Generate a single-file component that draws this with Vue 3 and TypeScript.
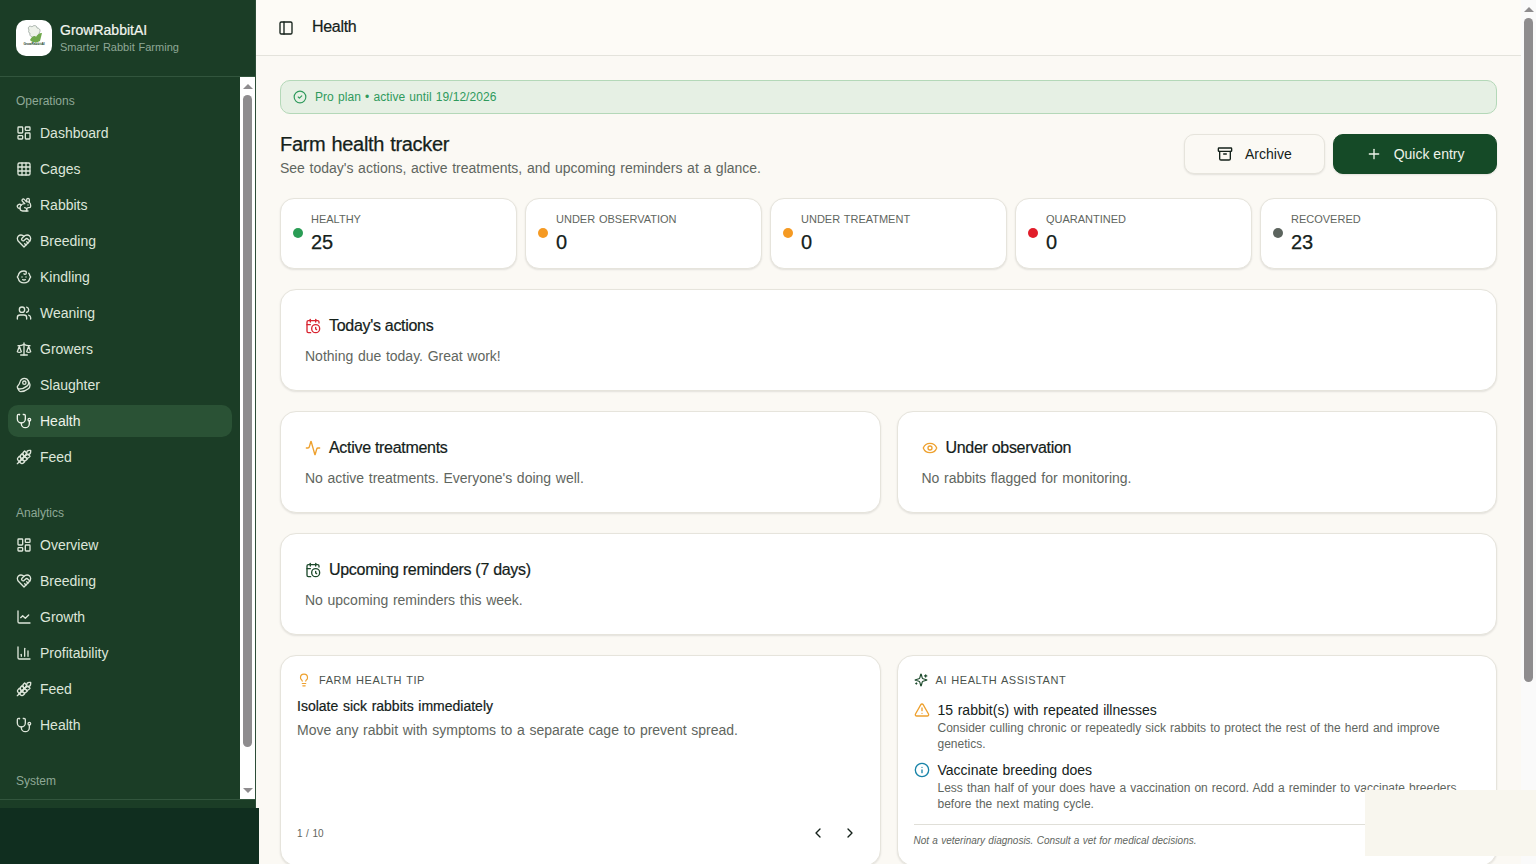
<script setup lang="ts">
const icons: Record<string, string> = {
  dashboard: '<rect width="7" height="9" x="3" y="3" rx="1"/><rect width="7" height="5" x="14" y="3" rx="1"/><rect width="7" height="9" x="14" y="12" rx="1"/><rect width="7" height="5" x="3" y="16" rx="1"/>',
  grid: '<rect width="18" height="18" x="3" y="3" rx="2"/><path d="M3 9h18"/><path d="M3 15h18"/><path d="M9 3v18"/><path d="M15 3v18"/>',
  rabbit: '<path d="M13 16a3 3 0 0 1 2.24 5"/><path d="M18 12h.01"/><path d="M18 21h-8a4 4 0 0 1-4-4 7 7 0 0 1 7-7h.2L9.6 6.4a1 1 0 1 1 2.8-2.8L15.8 7h.2c3.3 0 6 2.7 6 6v1a2 2 0 0 1-2 2h-1a3 3 0 0 0-3 3"/><path d="M20 8.54V4a2 2 0 1 0-4 0v3"/><path d="M7.612 12.524a3 3 0 1 0-1.6 4.3"/>',
  heart: '<path d="M19 14c1.49-1.46 3-3.21 3-5.5A5.5 5.5 0 0 0 16.5 3c-1.76 0-3 .5-4.5 2-1.5-1.5-2.74-2-4.5-2A5.5 5.5 0 0 0 2 8.5c0 2.3 1.5 4.05 3 5.5l7 7Z"/><path d="M12 5 9.04 7.96a2.17 2.17 0 0 0 0 3.08c.82.82 2.13.85 3 .07l2.07-1.9a2.82 2.82 0 0 1 3.79 0l2.96 2.66"/><path d="m18 15-2-2"/><path d="m15 18-2-2"/>',
  baby: '<path d="M9 12h.01"/><path d="M15 12h.01"/><path d="M10 16c.5.3 1.2.5 2 .5s1.5-.2 2-.5"/><path d="M19 6.3a9 9 0 0 1 1.8 3.9 2 2 0 0 1 0 3.6 9 9 0 0 1-17.6 0 2 2 0 0 1 0-3.6A9 9 0 0 1 12 3c2 0 3.5 1.1 3.5 2.5s-.9 2.5-2 2.5c-.8 0-1.5-.4-1.5-1"/>',
  users: '<path d="M16 21v-2a4 4 0 0 0-4-4H6a4 4 0 0 0-4 4v2"/><circle cx="9" cy="7" r="4"/><path d="M22 21v-2a4 4 0 0 0-3-3.87"/><path d="M16 3.13a4 4 0 0 1 0 7.75"/>',
  scale: '<path d="m16 16 3-8 3 8c-.87.65-1.92 1-3 1s-2.13-.35-3-1Z"/><path d="m2 16 3-8 3 8c-.87.65-1.92 1-3 1s-2.13-.35-3-1Z"/><path d="M7 21h10"/><path d="M12 3v18"/><path d="M3 7h2c2 0 5-1 7-2 2 1 5 2 7 2h2"/>',
  beef: '<circle cx="12.5" cy="8.5" r="2.5"/><path d="M12.5 2a6.5 6.5 0 0 0-6.22 4.6c-1.1 3.13-.78 3.9-3.18 6.08A3 3 0 0 0 5 18c4 0 8.4-1.8 11.4-4.3A6.5 6.5 0 0 0 12.5 2Z"/><path d="m18.5 6 2.19 4.5a6.48 6.48 0 0 1 .31 2 6.49 6.49 0 0 1-2.6 5.2C15.4 20.2 11 22 7 22a3 3 0 0 1-2.68-1.66L2.4 16.5"/>',
  stethoscope: '<path d="M4.8 2.3A.3.3 0 1 0 5 2H4a2 2 0 0 0-2 2v5a6 6 0 0 0 6 6a6 6 0 0 0 6-6V4a2 2 0 0 0-2-2h-1a.2.2 0 1 0 .3.3"/><path d="M8 15v1a6 6 0 0 0 6 6a6 6 0 0 0 6-6v-4"/><circle cx="20" cy="10" r="2"/>',
  wheat: '<path d="M2 22 16 8"/><path d="M3.47 12.53 5 11l1.53 1.53a3.5 3.5 0 0 1 0 4.94L5 19l-1.53-1.53a3.5 3.5 0 0 1 0-4.94Z"/><path d="M7.47 8.53 9 7l1.53 1.53a3.5 3.5 0 0 1 0 4.94L9 15l-1.53-1.53a3.5 3.5 0 0 1 0-4.94Z"/><path d="M11.47 4.53 13 3l1.53 1.53a3.5 3.5 0 0 1 0 4.94L13 11l-1.53-1.53a3.5 3.5 0 0 1 0-4.94Z"/><path d="M20 2h2v2a4 4 0 0 1-4 4h-2V6a4 4 0 0 1 4-4Z"/><path d="M11.47 17.47 13 19l-1.53 1.53a3.5 3.5 0 0 1-4.94 0L5 19l1.53-1.53a3.5 3.5 0 0 1 4.94 0Z"/><path d="M15.47 13.47 17 15l-1.53 1.53a3.5 3.5 0 0 1-4.94 0L9 15l1.53-1.53a3.5 3.5 0 0 1 4.94 0Z"/><path d="M19.47 9.47 21 11l-1.53 1.53a3.5 3.5 0 0 1-4.94 0L13 11l1.53-1.53a3.5 3.5 0 0 1 4.94 0Z"/>',
  line: '<path d="M3 3v16a2 2 0 0 0 2 2h16"/><path d="m19 9-5 5-4-4-3 3"/>',
  bars: '<path d="M3 3v16a2 2 0 0 0 2 2h16"/><path d="M18 17V9"/><path d="M13 17V5"/><path d="M8 17v-3"/>',
  panel: '<rect width="18" height="18" x="3" y="3" rx="2"/><path d="M9 3v18"/>',
  check: '<circle cx="12" cy="12" r="10"/><path d="m9 12 2 2 4-4"/>',
  archive: '<rect width="20" height="5" x="2" y="3" rx="1"/><path d="M4 8v11a2 2 0 0 0 2 2h12a2 2 0 0 0 2-2V8"/><path d="M10 12h4"/>',
  plus: '<path d="M5 12h14"/><path d="M12 5v14"/>',
  calendar: '<path d="M21 7.5V6a2 2 0 0 0-2-2H5a2 2 0 0 0-2 2v14a2 2 0 0 0 2 2h3.5"/><path d="M16 2v4"/><path d="M8 2v4"/><path d="M3 10h5"/><path d="M17.5 17.5 16 16.3V14"/><circle cx="16" cy="16" r="6"/>',
  activity: '<path d="M22 12h-2.48a2 2 0 0 0-1.93 1.46l-2.35 8.36a.25.25 0 0 1-.48 0L9.24 2.18a.25.25 0 0 0-.48 0l-2.35 8.36A2 2 0 0 1 4.49 12H2"/>',
  eye: '<path d="M2.062 12.348a1 1 0 0 1 0-.696 10.75 10.75 0 0 1 19.876 0 1 1 0 0 1 0 .696 10.75 10.75 0 0 1-19.876 0"/><circle cx="12" cy="12" r="3"/>',
  bulb: '<path d="M15 14c.2-1 .7-1.7 1.5-2.5 1-.9 1.5-2.2 1.5-3.5A6 6 0 0 0 6 8c0 1 .2 2.2 1.5 3.5.7.7 1.3 1.5 1.5 2.5"/><path d="M9 18h6"/><path d="M10 22h4"/>',
  sparkles: '<path d="M9.937 15.5A2 2 0 0 0 8.5 14.063l-6.135-1.582a.5.5 0 0 1 0-.962L8.5 9.936A2 2 0 0 0 9.937 8.5l1.582-6.135a.5.5 0 0 1 .963 0L14.063 8.5A2 2 0 0 0 15.5 9.937l6.135 1.581a.5.5 0 0 1 0 .964L15.5 14.063a2 2 0 0 0-1.437 1.437l-1.582 6.135a.5.5 0 0 1-.963 0z"/><path d="M20 3v4"/><path d="M22 5h-4"/><path d="M4 17v2"/><path d="M5 18H3"/>',
  alert: '<path d="m21.73 18-8-14a2 2 0 0 0-3.48 0l-8 14A2 2 0 0 0 4 21h16a2 2 0 0 0 1.73-3"/><path d="M12 9v4"/><path d="M12 17h.01"/>',
  info: '<circle cx="12" cy="12" r="10"/><path d="M12 16v-4"/><path d="M12 8h.01"/>',
  left: '<path d="m15 18-6-6 6-6"/>',
  right: '<path d="m9 18 6-6-6-6"/>',
}

const navGroups = [
  {
    label: 'Operations',
    items: [
      { name: 'Dashboard', icon: 'dashboard' },
      { name: 'Cages', icon: 'grid' },
      { name: 'Rabbits', icon: 'rabbit' },
      { name: 'Breeding', icon: 'heart' },
      { name: 'Kindling', icon: 'baby' },
      { name: 'Weaning', icon: 'users' },
      { name: 'Growers', icon: 'scale' },
      { name: 'Slaughter', icon: 'beef' },
      { name: 'Health', icon: 'stethoscope', active: true },
      { name: 'Feed', icon: 'wheat' },
    ],
  },
  {
    label: 'Analytics',
    items: [
      { name: 'Overview', icon: 'dashboard' },
      { name: 'Breeding', icon: 'heart' },
      { name: 'Growth', icon: 'line' },
      { name: 'Profitability', icon: 'bars' },
      { name: 'Feed', icon: 'wheat' },
      { name: 'Health', icon: 'stethoscope' },
    ],
  },
  { label: 'System', items: [] as { name: string; icon: string; active?: boolean }[] },
]

const stats = [
  { label: 'Healthy', value: 25, color: '#2a9d55' },
  { label: 'Under observation', value: 0, color: '#f59a23' },
  { label: 'Under treatment', value: 0, color: '#f59a23' },
  { label: 'Quarantined', value: 0, color: '#e11d2a' },
  { label: 'Recovered', value: 23, color: '#5c645e' },
]
</script>

<template>
  <div class="app">
    <aside class="rail">
      <div class="sidebar">
        <div class="brand">
          <div class="logo">
            <svg viewBox="0 0 36 36" width="36" height="36">
              <path d="M13 10c-2-3 1-5 3-3 1-2 5-2 5 1 3 0 4 3 2 5 1 3-2 5-4 4-3 1-6-1-5-4-1 0-2-1-1-3z" fill="#eef2ea" stroke="#8d9a92" stroke-width="0.7" />
              <path d="M14 20c2 3 7 3 10 1l2-8c-3 0-5 2-6 4-1-2-4-1-6 3z" fill="#6fa84b" />
              <text x="18" y="25" text-anchor="middle" class="logo-text">GrowRabbitAI</text>
            </svg>
          </div>
          <div class="brand-text">
            <div class="brand-name">GrowRabbitAI</div>
            <div class="brand-sub">Smarter Rabbit Farming</div>
          </div>
        </div>
        <div class="nav-wrap">
          <nav class="nav">
            <section v-for="group in navGroups" :key="group.label" class="nav-group">
              <div class="nav-label">{{ group.label }}</div>
              <a v-for="item in group.items" :key="item.name" class="nav-item" :class="{ active: item.active }">
                <svg class="ic" viewBox="0 0 24 24" v-html="icons[item.icon]"></svg>
                <span>{{ item.name }}</span>
              </a>
            </section>
          </nav>
          <div class="vbar nav-bar">
            <span class="arrow up"></span>
            <span class="thumb"></span>
            <span class="arrow down"></span>
          </div>
        </div>
        <div class="side-foot"></div>
      </div>
      <div class="rail-bottom"></div>
    </aside>

    <div class="scroller">
      <header class="topbar">
        <button class="icon-btn"><svg class="ic" viewBox="0 0 24 24" v-html="icons.panel"></svg></button>
        <div class="topbar-title">Health</div>
      </header>

      <main class="content">
        <div class="plan">
          <svg class="ic ic14" viewBox="0 0 24 24" v-html="icons.check"></svg>
          <span>Pro plan • active until 19/12/2026</span>
        </div>

        <div class="title-row">
          <div>
            <h1>Farm health tracker</h1>
            <p class="sub">See today's actions, active treatments, and upcoming reminders at a glance.</p>
          </div>
          <div class="actions">
            <button class="btn"><svg class="ic" viewBox="0 0 24 24" v-html="icons.archive"></svg>Archive</button>
            <button class="btn primary"><svg class="ic" viewBox="0 0 24 24" v-html="icons.plus"></svg>Quick entry</button>
          </div>
        </div>

        <div class="stats">
          <div v-for="s in stats" :key="s.label" class="stat">
            <span class="dot" :style="{ background: s.color }"></span>
            <div>
              <div class="stat-label">{{ s.label }}</div>
              <div class="stat-value">{{ s.value }}</div>
            </div>
          </div>
        </div>

        <section class="card">
          <h2><svg class="ic red" viewBox="0 0 24 24" v-html="icons.calendar"></svg>Today's actions</h2>
          <p>Nothing due today. Great work!</p>
        </section>

        <div class="two">
          <section class="card">
            <h2><svg class="ic amber" viewBox="0 0 24 24" v-html="icons.activity"></svg>Active treatments</h2>
            <p>No active treatments. Everyone's doing well.</p>
          </section>
          <section class="card">
            <h2><svg class="ic amber" viewBox="0 0 24 24" v-html="icons.eye"></svg>Under observation</h2>
            <p>No rabbits flagged for monitoring.</p>
          </section>
        </div>

        <section class="card">
          <h2><svg class="ic green" viewBox="0 0 24 24" v-html="icons.calendar"></svg>Upcoming reminders (7 days)</h2>
          <p>No upcoming reminders this week.</p>
        </section>

        <div class="two">
          <section class="card small">
            <div class="eyebrow"><svg class="ic ic14 amber" viewBox="0 0 24 24" v-html="icons.bulb"></svg>Farm health tip</div>
            <div class="tip-title">Isolate sick rabbits immediately</div>
            <div class="tip-body">Move any rabbit with symptoms to a separate cage to prevent spread.</div>
            <div class="tip-foot">
              <span class="count">1 / 10</span>
              <div class="pager">
                <button class="page-btn"><svg class="ic" viewBox="0 0 24 24" v-html="icons.left"></svg></button>
                <button class="page-btn"><svg class="ic" viewBox="0 0 24 24" v-html="icons.right"></svg></button>
              </div>
            </div>
          </section>
          <section class="card small">
            <div class="eyebrow"><svg class="ic ic14 green" viewBox="0 0 24 24" v-html="icons.sparkles"></svg>AI health assistant</div>
            <div class="insight">
              <svg class="ic amber" viewBox="0 0 24 24" v-html="icons.alert"></svg>
              <div>
                <div class="insight-title">15 rabbit(s) with repeated illnesses</div>
                <div class="insight-body">Consider culling chronic or repeatedly sick rabbits to protect the rest of the herd and improve genetics.</div>
              </div>
            </div>
            <div class="insight">
              <svg class="ic blue" viewBox="0 0 24 24" v-html="icons.info"></svg>
              <div>
                <div class="insight-title">Vaccinate breeding does</div>
                <div class="insight-body">Less than half of your does have a vaccination on record. Add a reminder to vaccinate breeders before the next mating cycle.</div>
              </div>
            </div>
            <div class="disclaimer">Not a veterinary diagnosis. Consult a vet for medical decisions.</div>
          </section>
        </div>
      </main>
    </div>

    <div class="vbar page-bar">
      <span class="arrow up"></span>
      <span class="thumb"></span>
    </div>

    <div class="toast-slot"></div>
  </div>
</template>

<style>
body {
  margin: 0;
  overflow: hidden;
}
</style>

<style scoped>
.app {
  display: flex;
  height: 864px;
  overflow: hidden;
  font-family: "Liberation Sans", Arial, sans-serif;
  word-spacing: 0.75px;
  color: #14211a;
  background: #fcfaf5;
}

.ic {
  width: 16px;
  height: 16px;
  flex: none;
  fill: none;
  stroke: currentColor;
  stroke-width: 2;
  stroke-linecap: round;
  stroke-linejoin: round;
}
.ic14 { width: 14px; height: 14px; }
.red { color: #d8232f; }
.amber { color: #eea12f; }
.green { color: #1d4a2c; }
.blue { color: #1783a8; }

/* scrollbars */
.vbar {
  width: 15px;
  flex: none;
  display: flex;
  flex-direction: column;
  align-items: center;
}
.nav-bar { background: #fff; }
.page-bar { background: #fafafa; }
.arrow {
  width: 0;
  height: 0;
  border-left: 5px solid transparent;
  border-right: 5px solid transparent;
}
.arrow.up {
  margin: 7px 0 6px;
  border-bottom: 5px solid #8e8c8e;
}
.arrow.down {
  margin: auto 0 6px;
  border-top: 5px solid #8e8c8e;
}
.thumb {
  width: 9px;
  border-radius: 5px;
  background: #8e8c8e;
}
.nav-bar .thumb { height: 652px; }
.page-bar .thumb { height: 664px; }

/* sidebar */
.rail {
  position: relative;
  z-index: 2;
  width: 256px;
  flex: none;
}
.sidebar {
  height: 808px;
  display: flex;
  flex-direction: column;
  box-sizing: border-box;
  background: #1b3d26;
  border-right: 1px solid #2c4d37;
}
.rail-bottom {
  width: 259px;
  height: 56px;
  background: #102e1f;
}
.brand {
  height: 76px;
  flex: none;
  display: flex;
  align-items: center;
  gap: 8px;
  padding: 0 16px;
  border-bottom: 1px solid #32553d;
}
.logo {
  width: 36px;
  height: 36px;
  border-radius: 10px;
  background: #fff;
  overflow: hidden;
}
.logo-text {
  font-size: 3.2px;
  font-weight: 700;
  word-spacing: 0;
  fill: #1b3d26;
}
.brand-text {
  margin-top: -2px;
}
.brand-name {
  font-size: 14px;
  line-height: 20px;
  -webkit-text-stroke: 0.2px currentColor;
  color: #f2f5ee;
}
.brand-sub {
  font-size: 11px;
  line-height: 14px;
  color: #8fa896;
}
.nav-wrap {
  flex: 1;
  min-height: 0;
  display: flex;
}
.nav {
  flex: 1;
  min-width: 0;
  overflow: hidden;
  padding-top: 16px;
}
.nav-group {
  margin-bottom: 32px;
}
.nav-label {
  padding: 0 16px;
  margin-bottom: 8px;
  font-size: 12px;
  line-height: 16px;
  color: #8fa896;
}
.nav-item {
  display: flex;
  align-items: center;
  gap: 8px;
  height: 32px;
  margin: 0 8px 4px;
  padding: 0 8px;
  border-radius: 10px;
  font-size: 14px;
  color: #dde6da;
}
.nav-item.active {
  background: #2a5235;
  color: #eef3ea;
}
.side-foot {
  height: 9px;
  flex: none;
  box-sizing: border-box;
  border-top: 1px solid #32553d;
}

/* main */
.scroller {
  flex: 1;
  min-width: 0;
  overflow: hidden;
  background: #fbf9f4;
}
.topbar {
  height: 55px;
  display: flex;
  align-items: center;
  gap: 12px;
  padding: 0 16px;
  background: #fdfbf6;
  border-bottom: 1px solid #e4e3dc;
}
.icon-btn {
  width: 28px;
  height: 28px;
  display: flex;
  align-items: center;
  justify-content: center;
  padding: 0;
  border: 0;
  background: none;
  color: #14211a;
}
.topbar-title {
  margin-top: -1px;
  font-size: 16px;
  letter-spacing: -0.3px;
  -webkit-text-stroke: 0.2px currentColor;
}
.content {
  display: flex;
  flex-direction: column;
  padding: 24px;
}
.plan {
  display: flex;
  align-items: center;
  gap: 8px;
  height: 34px;
  box-sizing: border-box;
  padding: 0 12px;
  border: 1px solid #b4d8b8;
  border-radius: 10px;
  background: #e6f0e4;
  color: #2f9a5c;
  font-size: 12px;
  letter-spacing: 0.06px;
}
.title-row {
  display: flex;
  justify-content: space-between;
  align-items: flex-start;
  margin-top: 20px;
}
h1 {
  margin: 0;
  font-size: 20px;
  line-height: 20px;
  font-weight: 400;
  letter-spacing: -0.3px;
  -webkit-text-stroke: 0.25px currentColor;
}
.sub {
  margin: 4px 0 0;
  font-size: 14px;
  line-height: 20px;
  color: #5f6660;
}
.actions {
  display: flex;
  gap: 8px;
}
.btn {
  display: flex;
  align-items: center;
  gap: 12px;
  height: 40px;
  box-sizing: border-box;
  padding: 0 32.5px;
  border: 1px solid #e6e4dc;
  border-radius: 10px;
  background: #fbf9f4;
  box-shadow: 0 1px 2px rgba(0, 0, 0, 0.1);
  font: inherit;
  font-size: 14px;
  color: #14211a;
}
.btn.primary {
  padding: 0 31.5px;
  border-color: #154a27;
  background: #154a27;
  color: #eef3ea;
}
.stats {
  display: grid;
  grid-template-columns: repeat(5, 1fr);
  gap: 8px;
  margin-top: 20px;
}
.stat {
  display: flex;
  align-items: center;
  gap: 8px;
  height: 71px;
  box-sizing: border-box;
  padding: 0 12px 1px;
  border: 1px solid #e6e4dc;
  border-radius: 14px;
  background: #fff;
  box-shadow: 0 1px 2px rgba(0, 0, 0, 0.1);
}
.dot {
  width: 10px;
  height: 10px;
  border-radius: 50%;
  flex: none;
}
.stat-label {
  font-size: 11px;
  line-height: 16px;
  text-transform: uppercase;
  color: #5f6660;
}
.stat-value {
  margin-top: 1px;
  font-size: 20px;
  line-height: 28px;
  -webkit-text-stroke: 0.25px currentColor;
}
.card {
  margin-top: 20px;
  padding: 24px;
  border: 1px solid #e6e4dc;
  border-radius: 16px;
  background: #fff;
  box-shadow: 0 1px 2px rgba(0, 0, 0, 0.1);
}
.card h2 {
  display: flex;
  align-items: center;
  gap: 8px;
  margin: 0;
  font-size: 16px;
  line-height: 24px;
  font-weight: 400;
  letter-spacing: -0.3px;
  word-spacing: 0;
  -webkit-text-stroke: 0.2px currentColor;
}
.card p {
  margin: 8px 0 0;
  font-size: 14px;
  line-height: 20px;
  color: #5f6660;
}
.two {
  display: grid;
  grid-template-columns: 1fr 1fr;
  gap: 16px;
  margin-top: 20px;
}
.two > .card {
  margin-top: 0;
}
.card.small {
  display: flex;
  flex-direction: column;
  padding: 16px;
}
.eyebrow {
  display: flex;
  align-items: center;
  gap: 8px;
  font-size: 11px;
  line-height: 16px;
  text-transform: uppercase;
  letter-spacing: 0.05em;
  color: #4a524c;
}
.tip-title {
  margin-top: 8px;
  font-size: 14px;
  line-height: 20px;
  -webkit-text-stroke: 0.2px currentColor;
}
.tip-body {
  margin-top: 4px;
  font-size: 14px;
  line-height: 20px;
  color: #5f6660;
}
.tip-foot {
  display: flex;
  align-items: center;
  justify-content: space-between;
  margin-top: auto;
}
.count {
  font-size: 10px;
  color: #5f6660;
}
.pager {
  display: flex;
  gap: 4px;
}
.page-btn {
  width: 28px;
  height: 32px;
  display: flex;
  align-items: center;
  justify-content: center;
  padding: 0;
  border: 0;
  background: none;
  color: #14211a;
}
.insight {
  display: flex;
  gap: 8px;
  margin-top: 8px;
}
.eyebrow + .insight {
  margin-top: 12px;
}
.insight > .ic {
  margin-top: 2px;
}
.insight-title {
  font-size: 14px;
  line-height: 20px;
}
.insight-body {
  font-size: 12px;
  line-height: 16px;
  color: #5f6660;
}
.disclaimer {
  margin-top: 12px;
  padding-top: 8px;
  border-top: 1px solid #e0dfd8;
  font-size: 10px;
  line-height: 16px;
  font-style: italic;
  word-spacing: 0.5px;
  color: #5f6660;
}
.toast-slot {
  position: fixed;
  right: 0;
  bottom: 8px;
  z-index: 3;
  width: 171px;
  height: 66px;
  background: #f8f6ee;
}
</style>
